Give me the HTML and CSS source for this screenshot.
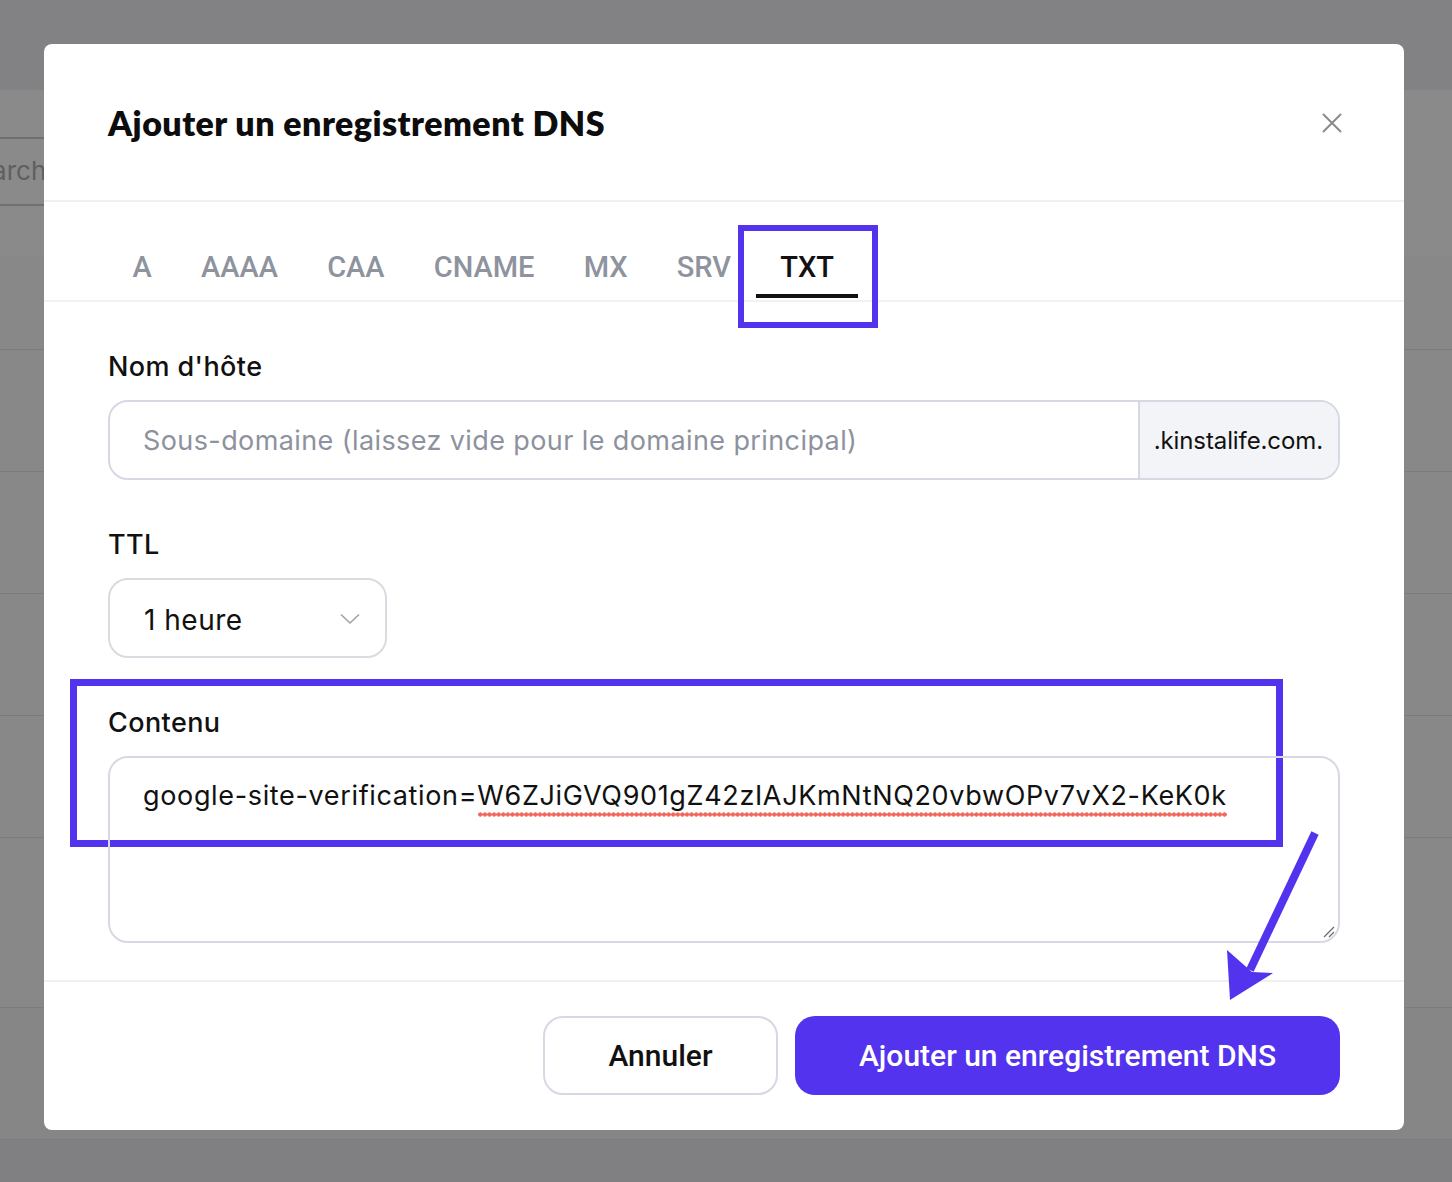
FILE: index.html
```html
<!DOCTYPE html>
<html lang="fr">
<head>
<meta charset="utf-8">
<title>Ajouter un enregistrement DNS</title>
<link rel="stylesheet" href="styles.css">
</head>
<body>
<div class="page">
  <div class="topbar"></div>
  <div class="toolbar">
    <div class="search">Search</div>
  </div>
  <div class="rows">
    <div class="row row-first"></div>
    <div class="row"></div>
    <div class="row"></div>
    <div class="row"></div>
    <div class="row"></div>
    <div class="row row-tall"></div>
    <div class="row row-last"></div>
  </div>
</div>

<div class="modal">
  <div class="modal-header">
    <h1 class="modal-title">Ajouter un enregistrement DNS</h1>
    <button class="close" aria-label="Fermer">
      <svg width="20" height="20" viewBox="0 0 20 20"><path d="M1 1 L19 19 M19 1 L1 19" stroke="#8b8b8b" stroke-width="2" fill="none"/></svg>
    </button>
  </div>

  <div class="tabs">
    <div class="tab">A</div>
    <div class="tab">AAAA</div>
    <div class="tab">CAA</div>
    <div class="tab">CNAME</div>
    <div class="tab">MX</div>
    <div class="tab">SRV</div>
    <div class="tab tab-active">TXT<span class="highlight highlight-tab"></span></div>
  </div>

  <div class="modal-body">
    <div class="field">
      <div class="label">Nom d'hôte</div>
      <div class="input-group">
        <div class="input placeholder">Sous-domaine (laissez vide pour le domaine principal)</div>
        <div class="suffix">.kinstalife.com.</div>
      </div>
    </div>

    <div class="field">
      <div class="label">TTL</div>
      <div class="select">
        <span class="select-value">1 heure</span>
        <svg width="20" height="12" viewBox="0 0 20 12"><path d="M1 1.5 L10 10 L19 1.5" stroke="#9da1aa" stroke-width="1.6" fill="none"/></svg>
      </div>
    </div>

    <div class="field field-content">
      <span class="highlight highlight-content"></span>
      <div class="label">Contenu</div>
      <div class="textarea">
        <span>google-site-verification=</span><span class="misspelled">W6ZJiGVQ901gZ42zIAJKmNtNQ20vbwOPv7vX2-KeK0k</span>
        <svg class="grip" width="14" height="14" viewBox="0 0 14 14"><path d="M13 3 L3 13 M13 8 L8 13" stroke="#6b6b6b" stroke-width="1.3" fill="none"/></svg>
      </div>
    </div>
  </div>

  <div class="modal-footer">
    <button class="btn btn-secondary">Annuler</button>
    <button class="btn btn-primary">Ajouter un enregistrement DNS</button>
  </div>
</div>

<svg class="annotation" width="1452" height="1182" viewBox="0 0 1452 1182">
  <line x1="1315" y1="833" x2="1250" y2="970" stroke="#5333ed" stroke-width="8"/>
  <polygon points="1227,950 1252,972 1273,973 1230,1000" fill="#5333ed"/>
</svg>
</body>
</html>
```

FILE: styles.css
```css
* { box-sizing: border-box; }

html, body {
  margin: 0;
  padding: 0;
}

body {
  width: 1452px;
  height: 1182px;
  overflow: hidden;
  background: #808082;
  font-family: "Inter", "Liberation Sans", sans-serif;
  position: relative;
}

/* dimmed page behind the dialog */
.page {
  display: flex;
  flex-direction: column;
}

.topbar {
  height: 90px;
  background: #828284;
}

.toolbar {
  height: 165px;
  background: #8a8a8b;
  padding-top: 47px;
  overflow: hidden;
}

.search {
  width: 230px;
  margin-left: -170px;
  height: 69px;
  border-top: 2px solid #707072;
  border-bottom: 2px solid #707072;
  font-family: "Inter", sans-serif;
  font-size: 26px;
  line-height: 64px;
  color: #5f5f61;
  padding-left: 130px;
}

.rows {
  display: flex;
  flex-direction: column;
}

.row {
  height: 122px;
  background: #888889;
  border-bottom: 1px solid #7c7c7e;
}

.row-first {
  height: 95px;
}

.row-tall {
  height: 170px;
}

.row-last {
  height: 132px;
  background: #868687;
}

/* dialog */
.modal {
  position: absolute;
  left: 44px;
  top: 44px;
  width: 1360px;
  height: 1086px;
  background: #fff;
  border-radius: 8px;
  display: flex;
  flex-direction: column;
}

.modal-header {
  height: 158px;
  border-bottom: 2px solid #eff0f3;
  display: flex;
  align-items: center;
  justify-content: space-between;
  padding: 0 62px 0 64px;
}

.modal-title {
  margin: 0;
  font-family: "Lato", "Liberation Sans", sans-serif;
  font-weight: 800;
  font-size: 34px;
  color: #0d0d0d;
  letter-spacing: 0.45px;
}

.close {
  border: 0;
  background: none;
  padding: 0;
  width: 20px;
  height: 20px;
  display: flex;
  margin-top: 2px;
}

.tabs {
  height: 100px;
  border-bottom: 2px solid #f1f2f5;
  display: flex;
  align-items: flex-end;
  padding: 0 64px 2px;
}

.tab {
  position: relative;
  padding: 0 24.6px;
  height: 60px;
  line-height: 58px;
  border-bottom: 4px solid transparent;
  font-family: "Roboto", "Liberation Sans", sans-serif;
  font-size: 29px;
  font-weight: 500;
  color: #8e939e;
}

.tab-active {
  color: #111;
  border-bottom-color: #111;
}

.highlight {
  position: absolute;
  border: 6px solid #5333ed;
  pointer-events: none;
}

.highlight-tab {
  left: -18px;
  right: -20px;
  top: -13px;
  bottom: -34px;
}

.modal-body {
  flex: 1;
  padding: 49px 64px 0;
  border-bottom: 2px solid #eff0f3;
  display: flex;
  flex-direction: column;
  gap: 49px;
}

.field {
  display: flex;
  flex-direction: column;
  gap: 17px;
}

.field-content {
  position: relative;
}

.highlight-content {
  left: -38px;
  top: -28px;
  width: 1213px;
  height: 168px;
  border-width: 7px;
}

.label {
  font-size: 27px;
  line-height: 32px;
  font-weight: 500;
  letter-spacing: 0.4px;
  color: #111;
}

.input-group {
  display: flex;
  height: 80px;
  border: 2px solid #d6d9e3;
  border-radius: 20px;
  overflow: hidden;
}

.input {
  flex: 1;
  padding-left: 33px;
  display: flex;
  align-items: center;
  font-size: 27px;
  letter-spacing: 0.4px;
}

.placeholder {
  color: #8d929e;
}

.suffix {
  background: #f3f4f7;
  border-left: 2px solid #d6d9e3;
  padding: 0 15px 0 14px;
  display: flex;
  align-items: center;
  font-size: 24px;
  letter-spacing: -0.1px;
  color: #111;
}

.select {
  width: 279px;
  height: 80px;
  border: 2px solid #d9dbe0;
  border-radius: 20px;
  display: flex;
  align-items: center;
  justify-content: space-between;
  padding: 0 25px 0 34px;
  font-size: 28px;
  letter-spacing: 0.5px;
  color: #111;
}

.select-value {
  margin-top: 3px;
}

.select svg {
  margin-top: 2px;
}

.textarea {
  position: relative;
  height: 187px;
  border: 2px solid #d6d9e3;
  border-radius: 20px;
  padding: 22px 33px 0;
  font-size: 27px;
  line-height: 32px;
  letter-spacing: 0.65px;
  color: #111;
  white-space: nowrap;
}

.misspelled {
  position: relative;
  display: inline-block;
}

.misspelled::after {
  content: "";
  position: absolute;
  left: 1px;
  right: 0;
  bottom: -5px;
  height: 5px;
  background-image: radial-gradient(circle at center, #f0685d 0, #f0685d 1.9px, rgba(240,104,93,0) 2.4px);
  background-size: 4.6px 5px;
  background-repeat: repeat-x;
}

.grip {
  position: absolute;
  right: 3px;
  bottom: 3px;
}

.modal-footer {
  height: 148px;
  display: flex;
  justify-content: flex-end;
  align-items: flex-start;
  gap: 17px;
  padding: 34px 64px 0;
}

.btn {
  height: 79px;
  border-radius: 20px;
  font-family: "Roboto", "Liberation Sans", sans-serif;
  font-size: 30px;
  font-weight: 500;
  cursor: pointer;
}

.btn-secondary {
  width: 235px;
  background: #fff;
  border: 2px solid #d6d9e3;
  color: #111;
}

.btn-primary {
  width: 545px;
  background: #5333ed;
  border: 0;
  color: #fff;
}

.annotation {
  position: absolute;
  left: 0;
  top: 0;
  pointer-events: none;
}
```
